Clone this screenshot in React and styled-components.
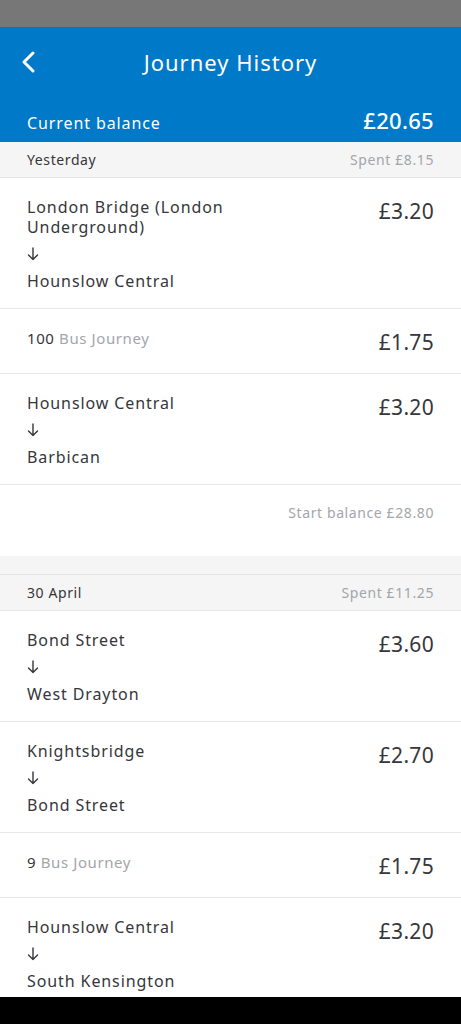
import React from "react";
import styled, { createGlobalStyle } from "styled-components";

const GlobalStyle = createGlobalStyle`
  html, body {
    margin: 0;
    padding: 0;
    background: #f5f5f5;
  }
  body {
    font-family: "Noto Sans", "Open Sans", sans-serif;
    color: #36363b;
    -webkit-font-smoothing: antialiased;
  }
`;

const Screen = styled.div`
  width: 461px;
  height: 1024px;
  display: flex;
  flex-direction: column;
  overflow: hidden;
  background: #f5f5f5;
`;

const StatusBar = styled.div`
  height: 27px;
  flex-shrink: 0;
  background: #777777;
`;

const Header = styled.header`
  background: #0079c8;
  color: #fff;
  flex-shrink: 0;
`;

const Toolbar = styled.div`
  height: 70px;
  display: grid;
  grid-template-columns: 60px 1fr 60px;
  align-items: center;
`;

const BackButton = styled.button`
  border: 0;
  background: none;
  padding: 0 0 0 20px;
  height: 100%;
  display: flex;
  align-items: center;
  cursor: pointer;
`;

const Title = styled.h1`
  margin: 0;
  text-align: center;
  font-size: 22px;
  font-weight: 400;
  letter-spacing: 1px;
`;

const Balance = styled.div`
  height: 45px;
  padding: 0 27px;
  display: flex;
  justify-content: space-between;
  align-items: baseline;
`;

const BalanceLabel = styled.span`
  font-size: 16px;
  line-height: 52px;
  letter-spacing: 0.9px;
`;

const BalanceAmount = styled.span`
  font-size: 22px;
  font-weight: 500;
  letter-spacing: 0.3px;
`;

const Days = styled.main`
  flex: 1;
  display: flex;
  flex-direction: column;
  gap: 18px;
  overflow: hidden;
`;

const Day = styled.section`
  background: #fff;
  border-top: ${(p) => (p.$first ? "none" : "1px solid #e4e4e4")};
`;

const DayHeader = styled.div`
  height: 36px;
  padding: 0 27px;
  box-sizing: border-box;
  background: #f5f5f5;
  border-bottom: 1px solid #e6e6e6;
  display: flex;
  justify-content: space-between;
  align-items: center;
  font-size: 14px;
  letter-spacing: 0.6px;
`;

const Muted = styled.span`
  color: #a3a6ab;
`;

const Row = styled.div`
  padding: 19px 27px 17px;
  border-bottom: 1px solid #e8e8e8;
  display: flex;
  justify-content: space-between;
  align-items: flex-start;
`;

const Stops = styled.div`
  display: flex;
  flex-direction: column;
  gap: 7px;
  max-width: 260px;
  font-size: 16px;
  line-height: 20px;
  letter-spacing: 0.9px;
`;

const Arrow = styled.span`
  height: 20px;
  display: flex;
  align-items: center;
`;

const Bus = styled.div`
  font-size: 15px;
  line-height: 20px;
  letter-spacing: 0.6px;
`;

const Price = styled.span`
  font-size: 21px;
  line-height: 28px;
  letter-spacing: 0.3px;
`;

const StartBalance = styled.div`
  padding: 18px 27px 33px;
  text-align: right;
  font-size: 14px;
  line-height: 20px;
  letter-spacing: 0.6px;
  color: #a3a6ab;
`;

const NavBar = styled.div`
  height: 27px;
  flex-shrink: 0;
  background: #000;
`;

const days = [
  {
    label: "Yesterday",
    spent: "£8.15",
    journeys: [
      { from: "London Bridge (London Underground)", to: "Hounslow Central", price: "£3.20" },
      { bus: "100", price: "£1.75" },
      { from: "Hounslow Central", to: "Barbican", price: "£3.20" },
    ],
    start: "£28.80",
  },
  {
    label: "30 April",
    spent: "£11.25",
    journeys: [
      { from: "Bond Street", to: "West Drayton", price: "£3.60" },
      { from: "Knightsbridge", to: "Bond Street", price: "£2.70" },
      { bus: "9", price: "£1.75" },
      { from: "Hounslow Central", to: "South Kensington", price: "£3.20" },
    ],
  },
];

const BackIcon = () => (
  <svg width="16" height="22" viewBox="0 0 16 22">
    <path
      d="M13 2 L4 11 L13 20"
      fill="none"
      stroke="#fff"
      strokeWidth="3"
      strokeLinecap="round"
      strokeLinejoin="round"
    />
  </svg>
);

const DownArrow = () => (
  <svg width="12" height="14" viewBox="0 0 12 14">
    <path
      d="M6 1 V12.5 M1.5 8 L6 12.5 L10.5 8"
      fill="none"
      stroke="#36363b"
      strokeWidth="1.4"
      strokeLinecap="round"
      strokeLinejoin="round"
    />
  </svg>
);

function Journey({ j }) {
  return (
    <Row>
      {j.bus ? (
        <Bus>
          {j.bus} <Muted>Bus Journey</Muted>
        </Bus>
      ) : (
        <Stops>
          <span>{j.from}</span>
          <Arrow>
            <DownArrow />
          </Arrow>
          <span>{j.to}</span>
        </Stops>
      )}
      <Price>{j.price}</Price>
    </Row>
  );
}

export default function App() {
  return (
    <Screen>
      <GlobalStyle />
      <StatusBar />
      <Header>
        <Toolbar>
          <BackButton aria-label="Back">
            <BackIcon />
          </BackButton>
          <Title>Journey History</Title>
          <span />
        </Toolbar>
        <Balance>
          <BalanceLabel>Current balance</BalanceLabel>
          <BalanceAmount>£20.65</BalanceAmount>
        </Balance>
      </Header>
      <Days>
        {days.map((d, i) => (
          <Day key={d.label} $first={i === 0}>
            <DayHeader>
              <span>{d.label}</span>
              <Muted>Spent {d.spent}</Muted>
            </DayHeader>
            {d.journeys.map((j, k) => (
              <Journey key={k} j={j} />
            ))}
            {d.start && <StartBalance>Start balance {d.start}</StartBalance>}
          </Day>
        ))}
      </Days>
      <NavBar />
    </Screen>
  );
}
